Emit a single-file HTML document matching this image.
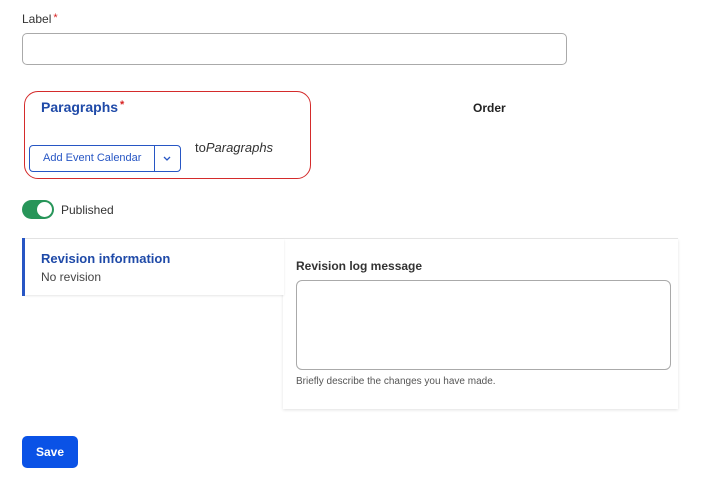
<!DOCTYPE html>
<html><head><style>
body{margin:0;width:720px;height:480px;background:#fff;font-family:"Liberation Sans",sans-serif;color:#222;position:relative;overflow:hidden}
.a{position:absolute}
</style></head><body>
<div class="a" style="left:22px;top:12px;font-size:12px;color:#333">Label<span style="color:#d72222;font-size:11px;vertical-align:top;margin-left:2px">*</span></div>
<div class="a" style="left:22px;top:33px;width:543px;height:30px;border:1px solid #aaa;border-radius:5px"></div>
<div class="a" style="left:24px;top:91px;width:285px;height:86px;border:1.5px solid #d42b2b;border-radius:14px"></div>
<div class="a" style="left:41px;top:99px;font-size:14px;font-weight:bold;color:#1f4aa8">Paragraphs<span style="color:#d72222;font-size:11px;vertical-align:top;margin-left:2px">*</span></div>
<div class="a" style="left:29px;top:145px;width:150px;height:25px;border:1.5px solid #2756c4;border-radius:4px"></div>
<div class="a" style="left:154px;top:146px;width:1px;height:26px;background:#2756c4"></div>
<div class="a" style="left:43px;top:152px;font-size:11px;color:#2756c4">Add Event Calendar</div>
<svg class="a" style="left:162px;top:155px" width="10" height="8"><path d="M2 2l3 3 3-3" stroke="#2756c4" stroke-width="1.3" fill="none"/></svg>
<div class="a" style="left:195px;top:140px;font-size:13px;color:#333">to<i>Paragraphs</i></div>
<div class="a" style="left:473px;top:101px;font-size:12px;font-weight:bold">Order</div>
<div class="a" style="left:22px;top:200px;width:32px;height:19px;border-radius:10px;background:#279559"></div>
<div class="a" style="left:37px;top:202px;width:15px;height:15px;border-radius:50%;background:#fff"></div>
<div class="a" style="left:61px;top:203px;font-size:12px;color:#333">Published</div>
<div class="a" style="left:283px;top:239px;width:395px;height:170px;box-shadow:0 1px 3px rgba(0,0,0,.12)"></div>
<div class="a" style="left:22px;top:238px;width:656px;height:1px;background:#e4e4e4"></div>
<div class="a" style="left:25px;top:239px;width:259px;height:56px;background:#fff;box-shadow:0 1px 2px rgba(0,0,0,.1)"></div>
<div class="a" style="left:22px;top:238px;width:3px;height:58px;background:#2756c4"></div>
<div class="a" style="left:41px;top:251px;font-size:13px;font-weight:bold;color:#1f4aa8">Revision information</div>
<div class="a" style="left:41px;top:270px;font-size:12px;color:#444">No revision</div>
<div class="a" style="left:296px;top:259px;font-size:12px;font-weight:bold;color:#333">Revision log message</div>
<div class="a" style="left:296px;top:280px;width:373px;height:88px;border:1px solid #aaa;border-radius:6px;background:#fff"></div>
<div class="a" style="left:296px;top:376px;font-size:10px;color:#555">Briefly describe the changes you have made.</div>
<div class="a" style="left:22px;top:436px;width:56px;height:32px;background:#0a52e6;border-radius:5px;color:#fff;font-size:12px;font-weight:bold;text-align:center;line-height:32px">Save</div>
</body></html>
